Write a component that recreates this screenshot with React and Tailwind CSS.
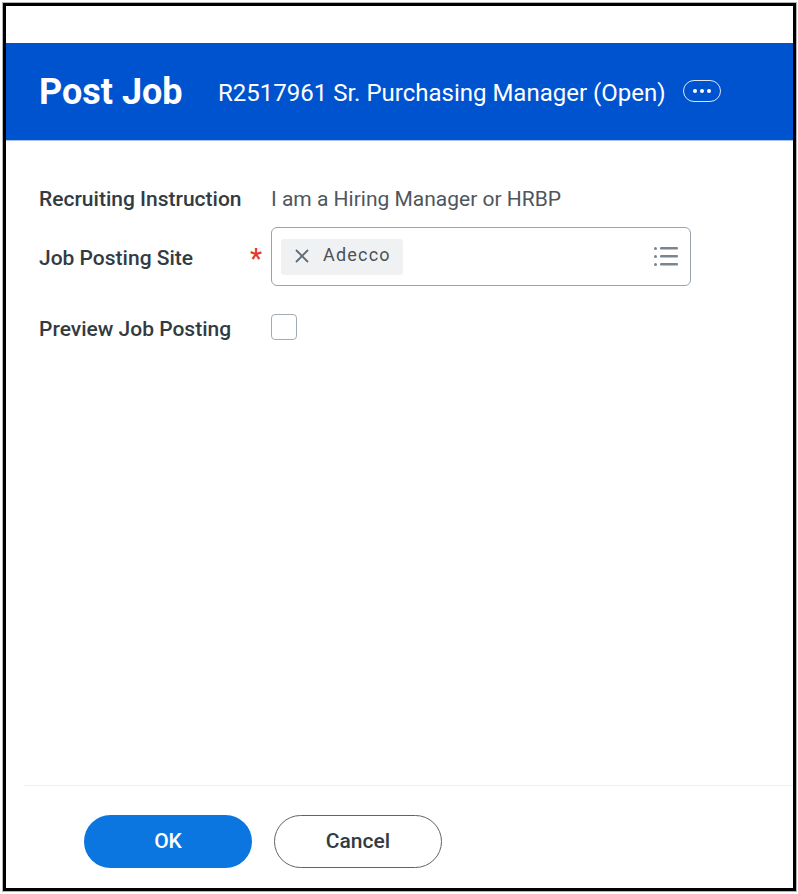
import React from "react";

const font = { fontFamily: "Roboto, sans-serif" };

function Row({ label, required, className, labelClass, children }) {
  return (
    <div className={`flex items-center ${className}`}>
      <div className="w-[232px] flex items-center justify-between pr-[9px] text-[21px] font-medium text-[#333b42]">
        <span className={labelClass}>{label}</span>
        {required && <span className="text-[27px] leading-none text-[#e5392c] mt-[5px]">*</span>}
      </div>
      {children}
    </div>
  );
}

export default function App() {
  return (
    <div className="w-[798px] h-[894px] bg-white font-['Roboto',sans-serif]" style={font}>
      <div className="ml-[2px] mt-[2px] w-[795px] h-[890px] border border-[#b5b5b5]">
        <div className="w-full h-full border-[3px] border-black flex flex-col">
          <div className="h-[37px] shrink-0" />

          <header className="h-[98px] shrink-0 bg-[#0053cf] border-b border-[#a9c1ea] flex items-center pl-[33px] text-white">
            <h1 className="text-[36px] font-bold leading-none w-[179px] whitespace-nowrap mt-[1px]">Post Job</h1>
            <span className="text-[24px] whitespace-nowrap mt-[2px]">R2517961 Sr. Purchasing Manager (Open)</span>
            <button className="ml-[17px] mb-[2px] w-[38px] h-[22px] rounded-full border border-[#dbe6f8] flex items-center justify-center gap-[3px]">
              <span className="w-[4px] h-[4px] rounded-full bg-white" />
              <span className="w-[4px] h-[4px] rounded-full bg-white" />
              <span className="w-[4px] h-[4px] rounded-full bg-white" />
            </button>
          </header>

          <main className="flex-1 pl-[33px]">
            <Row label="Recruiting Instruction" labelClass="mt-[1px]" className="mt-[43px] h-[30px]">
              <span className="text-[21px] text-[#4f565c] mt-[2px]">I am a Hiring Manager or HRBP</span>
            </Row>
            <Row label="Job Posting Site" labelClass="mt-[4px]" required className="mt-[13px]">
              <div className="w-[420px] h-[59px] rounded-[6px] border border-[#9aa3aa] flex items-center justify-between pl-[9px] pr-[12px]">
                <div className="h-[36px] w-[122px] rounded-[3px] bg-[#f0f1f2] flex items-center pl-[14px]">
                  <svg width="14" height="14" viewBox="0 0 14 14" fill="none" stroke="#5e6a75" strokeWidth="1.8" className="-mt-[2px]">
                    <path d="M1 1l12 12M13 1L1 13" />
                  </svg>
                  <span className="ml-[14px] -mt-[4px] text-[18px] tracking-[1.2px] text-[#4a5157]">Adecco</span>
                </div>
                <svg width="24" height="20" viewBox="0 0 24 20" fill="#7b858e" className="-mt-[2px]">
                  <rect x="0" y="1" width="3" height="3" rx="1.5" />
                  <rect x="6" y="1" width="18" height="2.5" rx="1" />
                  <rect x="0" y="9" width="3" height="3" rx="1.5" />
                  <rect x="6" y="9" width="18" height="2.5" rx="1" />
                  <rect x="0" y="17" width="3" height="3" rx="1.5" />
                  <rect x="6" y="17" width="18" height="2.5" rx="1" />
                </svg>
              </div>
            </Row>
            <Row label="Preview Job Posting" labelClass="mt-[2px]" className="mt-[26px]">
              <div className="w-[26px] h-[26px] -mt-[3px] rounded-[4px] border border-[#a4acb3] bg-white" />
            </Row>
          </main>

          <footer className="ml-[18px] h-[103px] shrink-0 border-t border-[#eeeeee] flex items-start pl-[60px] pt-[29px] gap-[22px]">
            <button className="w-[168px] h-[53px] rounded-full bg-[#0b76e0] text-white text-[21px] font-medium">OK</button>
            <button className="w-[168px] h-[53px] rounded-full border-[1.5px] border-[#5f6468] bg-white text-[#333b42] text-[21px] font-medium">Cancel</button>
          </footer>
        </div>
      </div>
    </div>
  );
}
